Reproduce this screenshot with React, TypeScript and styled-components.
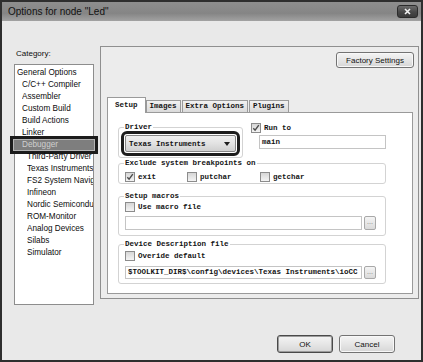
import React from 'react';
import styled, { createGlobalStyle } from 'styled-components';

const GlobalStyle = createGlobalStyle`
  html, body {
    margin: 0;
    padding: 0;
    background: #ffffff;
  }
  body {
    font-family: "Liberation Sans", Arial, sans-serif;
  }
  * {
    box-sizing: border-box;
  }
`;

const mono = `"Liberation Mono", "DejaVu Sans Mono", monospace`;

const Window = styled.div`
  width: 423px;
  height: 362px;
  border: 2px solid #2e2e2e;
  background: #e9e9e9;
  display: flex;
  flex-direction: column;
  overflow: hidden;
`;

const TitleBar = styled.div`
  height: 19px;
  padding: 0 3px 0 6px;
  display: flex;
  align-items: center;
  justify-content: space-between;
  background: linear-gradient(180deg, #8e8e8e 0%, #858585 60%, #a2a2a2 100%);
`;

const Title = styled.span`
  font-size: 10px;
  color: #121212;
`;

const CloseButton = styled.div`
  width: 21px;
  height: 13px;
  border-radius: 3px;
  border: 1px solid #2b2b2b;
  background: linear-gradient(180deg, #6c6c6c 0%, #474747 55%, #3a3a3a 100%);
  display: flex;
  align-items: center;
  justify-content: center;
`;

const Main = styled.div`
  display: flex;
  align-items: flex-start;
  padding: 0 2px 0 12px;
`;

const LeftCol = styled.div`
  width: 80px;
  padding-top: 27px;
  display: flex;
  flex-direction: column;
`;

const CategoryLabel = styled.div`
  font-size: 8px;
  line-height: 12px;
  padding-left: 2px;
  color: #0e0e0e;
`;

const CategoryList = styled.div`
  margin-top: 4px;
  height: 241px;
  border: 1px solid #8d8d8d;
  background: #ffffff;
  padding-top: 2px;
`;

const CategoryItem = styled.div<{ $level: number; $selected?: boolean }>`
  position: relative;
  height: 12px;
  line-height: 12px;
  font-size: 8.2px;
  color: ${(p) => (p.$selected ? '#cfcfcf' : '#0c0c0c')};
  padding-left: ${(p) => 2 + p.$level * 5 + (p.$selected ? 2 : 0)}px;
  margin: ${(p) => (p.$selected ? '0 -2px' : '0')};
  background: ${(p) => (p.$selected ? '#7e7e7e' : 'transparent')};
  box-shadow: ${(p) => (p.$selected ? 'inset 0 0 0 1px #b4b4b4' : 'none')};

  ${(p) =>
    p.$selected &&
    `
    &::after {
      content: '';
      position: absolute;
      inset: -3px;
      border: 3px solid #1c1c1c;
      pointer-events: none;
    }
  `}
`;

const ItemText = styled.span`
  display: block;
  overflow: hidden;
  white-space: nowrap;
`;

const Panel = styled.div`
  margin-left: 6px;
  margin-top: 25px;
  width: 319px;
  height: 253px;
  border: 1px solid #8f8f8f;
  background: #ececec;
  padding: 5px 4px 4px 6px;
  display: flex;
  flex-direction: column;
`;

const PushButton = styled.div<{ $w: number; $h: number; $default?: boolean }>`
  width: ${(p) => p.$w}px;
  height: ${(p) => p.$h}px;
  border: 1px solid ${(p) => (p.$default ? '#4a4a4a' : '#737373')};
  border-radius: 3px;
  background: linear-gradient(180deg, #f4f4f4 0%, #e6e6e6 50%, #d6d6d6 100%);
  box-shadow: inset 0 0 0 1px ${(p) => (p.$default ? '#9c9c9c' : '#f8f8f8')};
  font-size: 8px;
  color: #111;
  display: flex;
  align-items: center;
  justify-content: center;
`;

const FactoryRow = styled.div`
  display: flex;
  justify-content: flex-end;
`;

const TabStrip = styled.div`
  margin-top: 29px;
  height: 15px;
  display: flex;
  align-items: flex-end;
  position: relative;
  z-index: 1;
`;

const Tab = styled.div<{ $active?: boolean }>`
  height: ${(p) => (p.$active ? 16 : 12)}px;
  margin-bottom: ${(p) => (p.$active ? -1 : 0)}px;
  margin-right: ${(p) => (p.$active ? 0 : 1)}px;
  padding: ${(p) => (p.$active ? '2px 7px 0' : '0 3px')};
  border: 1px solid #9a9a9a;
  border-bottom: none;
  background: ${(p) =>
    p.$active ? '#ffffff' : 'linear-gradient(180deg, #f2f2f2 0%, #dadada 100%)'};
  font-family: ${mono};
  font-weight: bold;
  font-size: 7.5px;
  line-height: 11px;
  color: #141414;
  white-space: nowrap;
`;

const TabBody = styled.div`
  flex: 1;
  margin-right: 1px;
  border: 1px solid #9a9a9a;
  background: #ffffff;
  padding: 9px 0 0 10px;
  display: flex;
  flex-direction: column;
`;

const TopRow = styled.div`
  display: flex;
  align-items: flex-start;
`;

const Group = styled.fieldset<{ $w: number; $mt?: number; $pt?: number; $pb?: number }>`
  width: ${(p) => p.$w}px;
  margin: ${(p) => p.$mt ?? 0}px 0 0 0;
  padding: ${(p) => p.$pt ?? 0}px 4px ${(p) => p.$pb ?? 0}px 6px;
  border: 1px solid #d3d3d3;
  border-radius: 3px;
  min-width: 0;
`;

const Legend = styled.legend`
  margin-left: -1px;
  padding: 0 1px;
  font-family: ${mono};
  font-weight: bold;
  font-size: 7.5px;
  line-height: 10px;
  color: #141414;
`;

const Combo = styled.div`
  width: 111px;
  height: 17px;
  border: 1px solid #858585;
  border-radius: 2px;
  background: linear-gradient(180deg, #f0f0f0 0%, #e2e2e2 50%, #cfcfcf 100%);
  padding: 0 5px 0 3px;
  display: flex;
  align-items: center;
  justify-content: space-between;
  outline: 3px solid #1c1c1c;
  outline-offset: 1px;
  font-family: ${mono};
  font-weight: bold;
  font-size: 7.5px;
  color: #141414;
`;

const RunCol = styled.div`
  margin-left: 8px;
  width: 135px;
  display: flex;
  flex-direction: column;
`;

const CheckRow = styled.div`
  height: 12px;
  display: flex;
  align-items: center;
  gap: 3px;
  font-family: ${mono};
  font-weight: bold;
  font-size: 7.5px;
  color: #141414;
  white-space: nowrap;
`;

const Box = styled.span`
  width: 10px;
  height: 10px;
  flex: none;
  border: 1px solid #8c8c8c;
  background: linear-gradient(180deg, #d6d6d6 0%, #f4f4f4 100%);
  display: flex;
  align-items: center;
  justify-content: center;
`;

const CheckGrid = styled.div`
  display: grid;
  grid-template-columns: 62px 73px auto;
  margin-top: 3px;
`;

const Field = styled.div<{ $w: number; $h: number; $mt?: number; $ml?: number }>`
  width: ${(p) => p.$w}px;
  height: ${(p) => p.$h}px;
  margin-top: ${(p) => p.$mt ?? 0}px;
  margin-left: ${(p) => p.$ml ?? 0}px;
  border: 1px solid #c4c4c4;
  background: #ffffff;
  padding: 0 2px;
  font-family: ${mono};
  font-weight: bold;
  font-size: 7.5px;
  line-height: ${(p) => p.$h - 2}px;
  color: #141414;
  white-space: nowrap;
  overflow: hidden;
`;

const FieldRow = styled.div<{ $mt: number }>`
  display: flex;
  gap: 2px;
  margin-top: ${(p) => p.$mt}px;
`;

const Browse = styled.div<{ $h: number }>`
  width: 12px;
  height: ${(p) => p.$h}px;
  border: 1px solid #a8a8a8;
  border-radius: 2px;
  background: linear-gradient(180deg, #f4f4f4 0%, #dadada 100%);
  font-size: 7px;
  line-height: ${(p) => p.$h - 4}px;
  text-align: center;
  color: #777;
`;

const Footer = styled.div`
  margin-top: auto;
  display: flex;
  justify-content: flex-end;
  gap: 6px;
  padding: 0 26px 7px 0;
`;

const Check = ({ on, label }: { on?: boolean; label: string }) => (
  <CheckRow>
    <Box>
      {on && (
        <svg width="8" height="8" viewBox="0 0 8 8">
          <path d="M1.3 4.2 L3.1 6.2 L6.8 1.2" fill="none" stroke="#4a4a4a" strokeWidth="1.4" />
        </svg>
      )}
    </Box>
    <span>{label}</span>
  </CheckRow>
);

const categories: { name: string; level: number; selected?: boolean }[] = [
  { name: 'General Options', level: 0 },
  { name: 'C/C++ Compiler', level: 1 },
  { name: 'Assembler', level: 1 },
  { name: 'Custom Build', level: 1 },
  { name: 'Build Actions', level: 1 },
  { name: 'Linker', level: 1 },
  { name: 'Debugger', level: 1, selected: true },
  { name: 'Third-Party Driver', level: 2 },
  { name: 'Texas Instruments', level: 2 },
  { name: 'FS2 System Navigator', level: 2 },
  { name: 'Infineon', level: 2 },
  { name: 'Nordic Semiconductor', level: 2 },
  { name: 'ROM-Monitor', level: 2 },
  { name: 'Analog Devices', level: 2 },
  { name: 'Silabs', level: 2 },
  { name: 'Simulator', level: 2 },
];

const tabs = ['Setup', 'Images', 'Extra Options', 'Plugins'];

export default function App() {
  return (
    <>
      <GlobalStyle />
      <Window>
        <TitleBar>
          <Title>Options for node "Led"</Title>
          <CloseButton>
            <svg width="7" height="7" viewBox="0 0 7 7">
              <path d="M1 1 L6 6 M6 1 L1 6" stroke="#f2f2f2" strokeWidth="1.6" />
            </svg>
          </CloseButton>
        </TitleBar>

        <Main>
          <LeftCol>
            <CategoryLabel>Category:</CategoryLabel>
            <CategoryList>
              {categories.map((c) => (
                <CategoryItem key={c.name} $level={c.level} $selected={c.selected}>
                  <ItemText>{c.name}</ItemText>
                </CategoryItem>
              ))}
            </CategoryList>
          </LeftCol>

          <Panel>
            <FactoryRow>
              <PushButton $w={78} $h={16}>Factory Settings</PushButton>
            </FactoryRow>

            <TabStrip>
              {tabs.map((t, i) => (
                <Tab key={t} $active={i === 0}>
                  {t}
                </Tab>
              ))}
            </TabStrip>

            <TabBody>
              <TopRow>
                <Group $w={125} $pt={3} $pb={5}>
                  <Legend>Driver</Legend>
                  <Combo>
                    <span>Texas Instruments</span>
                    <svg width="6" height="4" viewBox="0 0 6 4">
                      <path d="M0 0 H6 L3 4 Z" fill="#1e1e1e" />
                    </svg>
                  </Combo>
                </Group>
                <RunCol>
                  <Check on label="Run to" />
                  <Field $w={127} $h={14} $mt={1} $ml={8}>
                    main
                  </Field>
                </RunCol>
              </TopRow>

              <Group $w={268} $pt={0} $pb={0}>
                <Legend>Exclude system breakpoints on</Legend>
                <CheckGrid>
                  <Check on label="exit" />
                  <Check label="putchar" />
                  <Check label="getchar" />
                </CheckGrid>
              </Group>

              <Group $w={268} $mt={7} $pt={0} $pb={5}>
                <Legend>Setup macros</Legend>
                <Check label="Use macro file" />
                <FieldRow $mt={3}>
                  <Field $w={237} $h={14} />
                  <Browse $h={14}>...</Browse>
                </FieldRow>
              </Group>

              <Group $w={268} $mt={3} $pt={1} $pb={4}>
                <Legend>Device Description file</Legend>
                <Check label="Overide default" />
                <FieldRow $mt={4}>
                  <Field $w={237} $h={13}>
                    $TOOLKIT_DIR$\config\devices\Texas Instruments\ioCC
                  </Field>
                  <Browse $h={13}>...</Browse>
                </FieldRow>
              </Group>
            </TabBody>
          </Panel>
        </Main>

        <Footer>
          <PushButton $w={56} $h={18} $default>
            OK
          </PushButton>
          <PushButton $w={56} $h={18}>
            Cancel
          </PushButton>
        </Footer>
      </Window>
    </>
  );
}
